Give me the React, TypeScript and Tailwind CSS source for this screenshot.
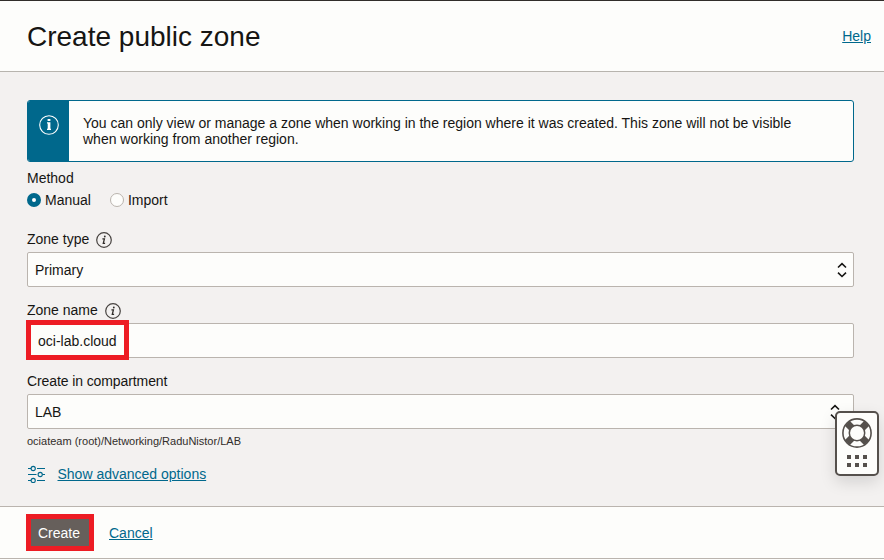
import type { ReactNode } from "react";

function InfoIcon() {
  return (
    <svg width="16" height="16" viewBox="0 0 16 16" fill="none" className="relative top-px">
      <circle cx="8" cy="8" r="7.3" stroke="#474340" strokeWidth="1.2" />
      <circle cx="8.8" cy="4.5" r="0.9" fill="#312d2a" />
      <path d="M6.4 6.9h2L7.3 11.3h1.8" stroke="#312d2a" strokeWidth="1.3" />
    </svg>
  );
}

function UpDownIcon() {
  return (
    <svg width="10" height="16" viewBox="0 0 10 16" fill="none" stroke="#161513" strokeWidth="1.6">
      <path d="M1 5.5 5 1.7 9 5.5M1 10.7 5 14.5 9 10.7" />
    </svg>
  );
}

function SlidersIcon() {
  return (
    <svg width="18" height="18" viewBox="0 0 18 18" fill="none" stroke="#00688c" strokeWidth="1.1">
      <circle cx="6.2" cy="3.5" r="2.1" />
      <circle cx="13.2" cy="9.5" r="2.1" />
      <circle cx="6.2" cy="15.5" r="2.1" />
      <path d="M1 3.5h3.1M10 3.5h8M1 9.5h8.5M15.3 9.5H18M1 15.5h3.1M10 15.5h8" />
    </svg>
  );
}

function Label({ children, info }: { children: ReactNode; info?: boolean }) {
  return (
    <div className="flex h-4 items-center gap-[7px]">
      <span>{children}</span>
      {info && <InfoIcon />}
    </div>
  );
}

function Field({ value, children }: { value?: string; children?: ReactNode }) {
  return (
    <div className="relative mt-[5px] flex h-[35px] items-center justify-between rounded-[2px] border border-[#bab4ae] bg-[#fdfdfb] pl-[7px] pr-[6px]">
      <span>{value}</span>
      {children}
    </div>
  );
}

function SupportWidget() {
  return (
    <div className="absolute left-[835px] top-[411px] flex h-[65px] w-11 flex-col items-center rounded-[5px] border-2 border-[#55504c] bg-[#fdfdfb] pt-[5px] shadow-[0_6px_16px_rgba(0,0,0,0.13)]">
      <svg width="30" height="30" viewBox="0 0 30 30" fill="none">
        <path d="m5.2 5.2 5 5M24.8 5.2l-5 5M5.2 24.8l5-5M24.8 24.8l-5-5" stroke="#55504c" strokeWidth="7" />
        <circle cx="15" cy="15" r="14.1" stroke="#55504c" strokeWidth="1.6" />
        <circle cx="15" cy="15" r="7.7" fill="#fdfdfb" stroke="#55504c" strokeWidth="1.5" />
      </svg>
      <div className="mt-[7px] grid grid-cols-3 gap-1">
        {[0, 1, 2, 3, 4, 5].map((i) => (
          <i key={i} className="size-1 bg-[#55504c]" />
        ))}
      </div>
    </div>
  );
}

export default function App() {
  return (
    <div className="relative flex h-[560px] w-[884px] flex-col overflow-hidden bg-[#f3f1f0] font-['Liberation_Sans',Arial,sans-serif] text-[14px] leading-4 text-[#161513]">
      <header className="flex h-[72px] items-center justify-between border-b border-t border-b-[#b7b4ae] border-t-[#312d2a] bg-[#fdfdfb] pl-[27px] pr-[13px]">
        <h1 className="pt-[2px] text-[28px] leading-8">Create public zone</h1>
        <a className="text-[#00688c] underline">Help</a>
      </header>

      <main className="h-[434px] pl-[27px] pr-[30px] pt-7">
        <div className="flex h-[62px] overflow-hidden rounded-[3px] border border-[#00688c] bg-[#fdfdfb]">
          <div className="flex w-[41px] justify-center bg-[#00688c] pt-[14px]">
            <svg width="20" height="20" viewBox="0 0 20 20" fill="none" className="ml-px">
              <circle cx="10" cy="10" r="9.3" stroke="#fff" strokeWidth="1.1" />
              <path d="M8.6 4h2.8v2H8.6zM8 7.3h3.4v6.5h.6V15H8v-1.2h.7V8.4H8z" fill="#fff" />
            </svg>
          </div>
          <p className="w-[740px] pl-[14px] pt-[14px]">
            You can only view or manage a zone when working in the region where it was created. This zone will not be visible
            when working from another region.
          </p>
        </div>

        <div className="mt-2">
          <Label>Method</Label>
        </div>
        <div className="mt-[6px] flex h-4 items-center">
          <span className="size-[14px] rounded-full border-[5px] border-[#00688c] bg-white" />
          <span className="ml-1">Manual</span>
          <span className="ml-[19px] size-[14px] rounded-full border border-[#bab4ae] bg-[#fdfdfb]" />
          <span className="ml-1">Import</span>
        </div>

        <div className="mt-[23px]">
          <Label info>Zone type</Label>
          <Field value="Primary">
            <UpDownIcon />
          </Field>
        </div>

        <div className="mt-[15px]">
          <Label info>Zone name</Label>
          <Field>
            <span className="absolute -left-[2px] -top-1 flex h-10 w-[103px] items-center border-5 border-[#ed1c24] bg-[#fdfdfb] pl-[7px] pt-[2px]">
              oci-lab.cloud
            </span>
          </Field>
        </div>

        <div className="mt-[15px]">
          <div className="tracking-[-0.1px]">
            <Label>Create in compartment</Label>
          </div>
          <Field value="LAB">
            <span className="mr-[7px]">
              <UpDownIcon />
            </span>
          </Field>
        </div>

        <p className="mt-[5px] text-[11px] leading-[14px] text-[#312d2a]">ociateam (root)/Networking/RaduNistor/LAB</p>
        <div className="mt-[17px] flex h-[18px] items-center gap-[12.5px]">
          <SlidersIcon />
          <a className="text-[#00688c] underline">Show advanced options</a>
        </div>
      </main>

      <footer className="flex h-[53px] items-center border-b border-t border-[#bab4ae] bg-[#fdfdfb] pl-[26px]">
        <button className="flex h-[37px] w-[68px] items-center border-5 border-[#ed1c24] bg-[#665f5b] pl-[7px] text-white">
          Create
        </button>
        <a className="ml-[15px] text-[#00688c] underline">Cancel</a>
      </footer>
      <div className="h-px bg-[#fdfdfb]" />

      <SupportWidget />
    </div>
  );
}
